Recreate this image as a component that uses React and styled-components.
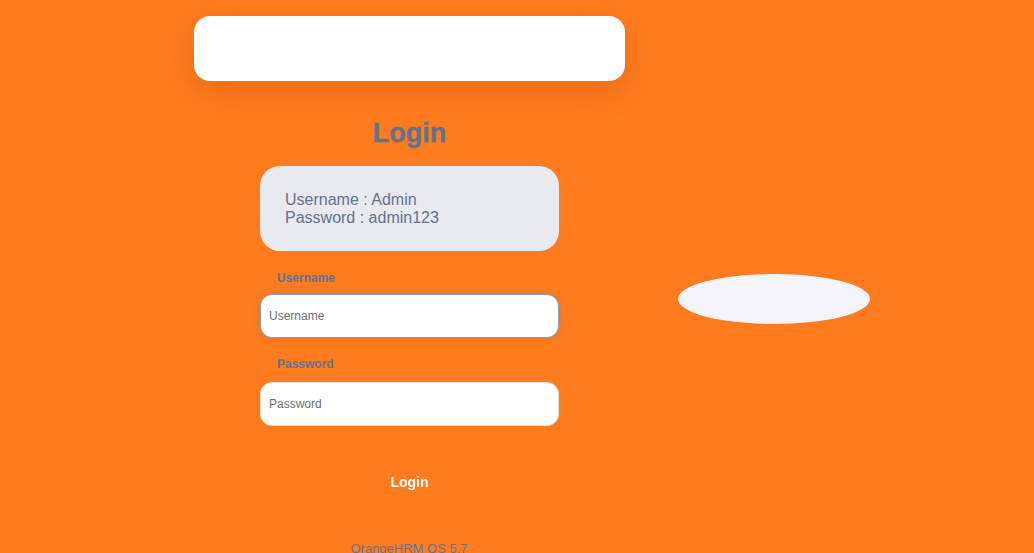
import React from "react";
import styled, { createGlobalStyle } from "styled-components";

const GlobalStyle = createGlobalStyle`
  body {
    margin: 0;
    background: #ff7b1d;
    font-family: "Liberation Sans", Arial, sans-serif;
  }
  * { box-sizing: border-box; }
`;

const Viewport = styled.div`
  height: 100vh;
  overflow-y: scroll;
  &::-webkit-scrollbar {
    width: 11px;
    display: block;
  }
  &::-webkit-scrollbar-track {
    background: #f4f4fa;
  }
  &::-webkit-scrollbar-thumb {
    background: #cfd2e0;
    border: 2px solid #f4f4fa;
    border-radius: 0;
  }
  &::-webkit-scrollbar-button:single-button {
    display: block;
    height: 11px;
    background: #f4f4fa;
  }
`;

const Page = styled.div`
  display: flex;
  align-items: flex-start;
  padding: 16px 0 40px 194px;
`;

const LeftColumn = styled.div`
  width: 431px;
  display: flex;
  flex-direction: column;
  align-items: center;
`;

const TopCard = styled.div`
  width: 100%;
  height: 65px;
  background: #ffffff;
  border-radius: 16px;
  box-shadow: 0 10px 30px rgba(120, 50, 0, 0.18);
`;

const Heading = styled.h5`
  margin: 36px 0 0;
  font-size: 27px;
  line-height: 32px;
  font-weight: 700;
  color: #64728c;
  -webkit-text-stroke: 0.4px #64728c;
`;

const Form = styled.form`
  width: 299px;
  margin-top: 17px;
  display: flex;
  flex-direction: column;
`;

const CredBox = styled.div`
  background: #e8eaef;
  border-radius: 20px;
  padding: 25px 25px 24px;
  color: #64728c;
  font-size: 16px;
  line-height: 18px;
`;

const Label = styled.label`
  margin-top: ${(p) => p.$top}px;
  padding-left: 17px;
  font-size: 12px;
  font-weight: 700;
  line-height: 16px;
  color: #64728c;
`;

const Input = styled.input`
  margin-top: ${(p) => p.$gap}px;
  height: 44px;
  width: 100%;
  border-radius: 12px;
  border: 1px solid ${(p) => (p.$active ? "#8d9bb5" : "#dedede")};
  box-shadow: ${(p) => (p.$active ? "0 0 6px rgba(100, 114, 140, 0.35)" : "none")};
  background: #ffffff;
  padding: 0 8px;
  font-family: "Liberation Sans", Arial, sans-serif;
  font-size: 12px;
  color: #333;
  outline: none;
  &::placeholder {
    color: #6b6f7b;
  }
`;

const LoginButton = styled.button`
  margin-top: 36px;
  height: 40px;
  border: none;
  background: transparent;
  color: #ffffff;
  font-family: "Liberation Sans", Arial, sans-serif;
  font-size: 14px;
  font-weight: 700;
`;

const Footer = styled.p`
  margin: 39px 0 0;
  font-size: 13px;
  line-height: 16px;
  color: #64728c;
  text-align: center;
`;

const Ellipse = styled.div`
  margin: 258px 0 0 53px;
  width: 192px;
  height: 50px;
  border-radius: 50%;
  background: #f4f4fa;
`;

export default function App() {
  return (
    <>
      <GlobalStyle />
      <Viewport>
        <Page>
          <LeftColumn>
            <TopCard />
            <Heading>Login</Heading>
            <Form onSubmit={(e) => e.preventDefault()}>
              <CredBox>
                <div>Username : Admin</div>
                <div>Password : admin123</div>
              </CredBox>
              <Label $top={19}>Username</Label>
              <Input $gap={8} $active placeholder="Username" autoFocus />
              <Label $top={18}>Password</Label>
              <Input $gap={10} type="password" placeholder="Password" />
              <LoginButton type="submit">Login</LoginButton>
            </Form>
            <Footer>OrangeHRM OS 5.7</Footer>
          </LeftColumn>
          <Ellipse />
        </Page>
      </Viewport>
    </>
  );
}
